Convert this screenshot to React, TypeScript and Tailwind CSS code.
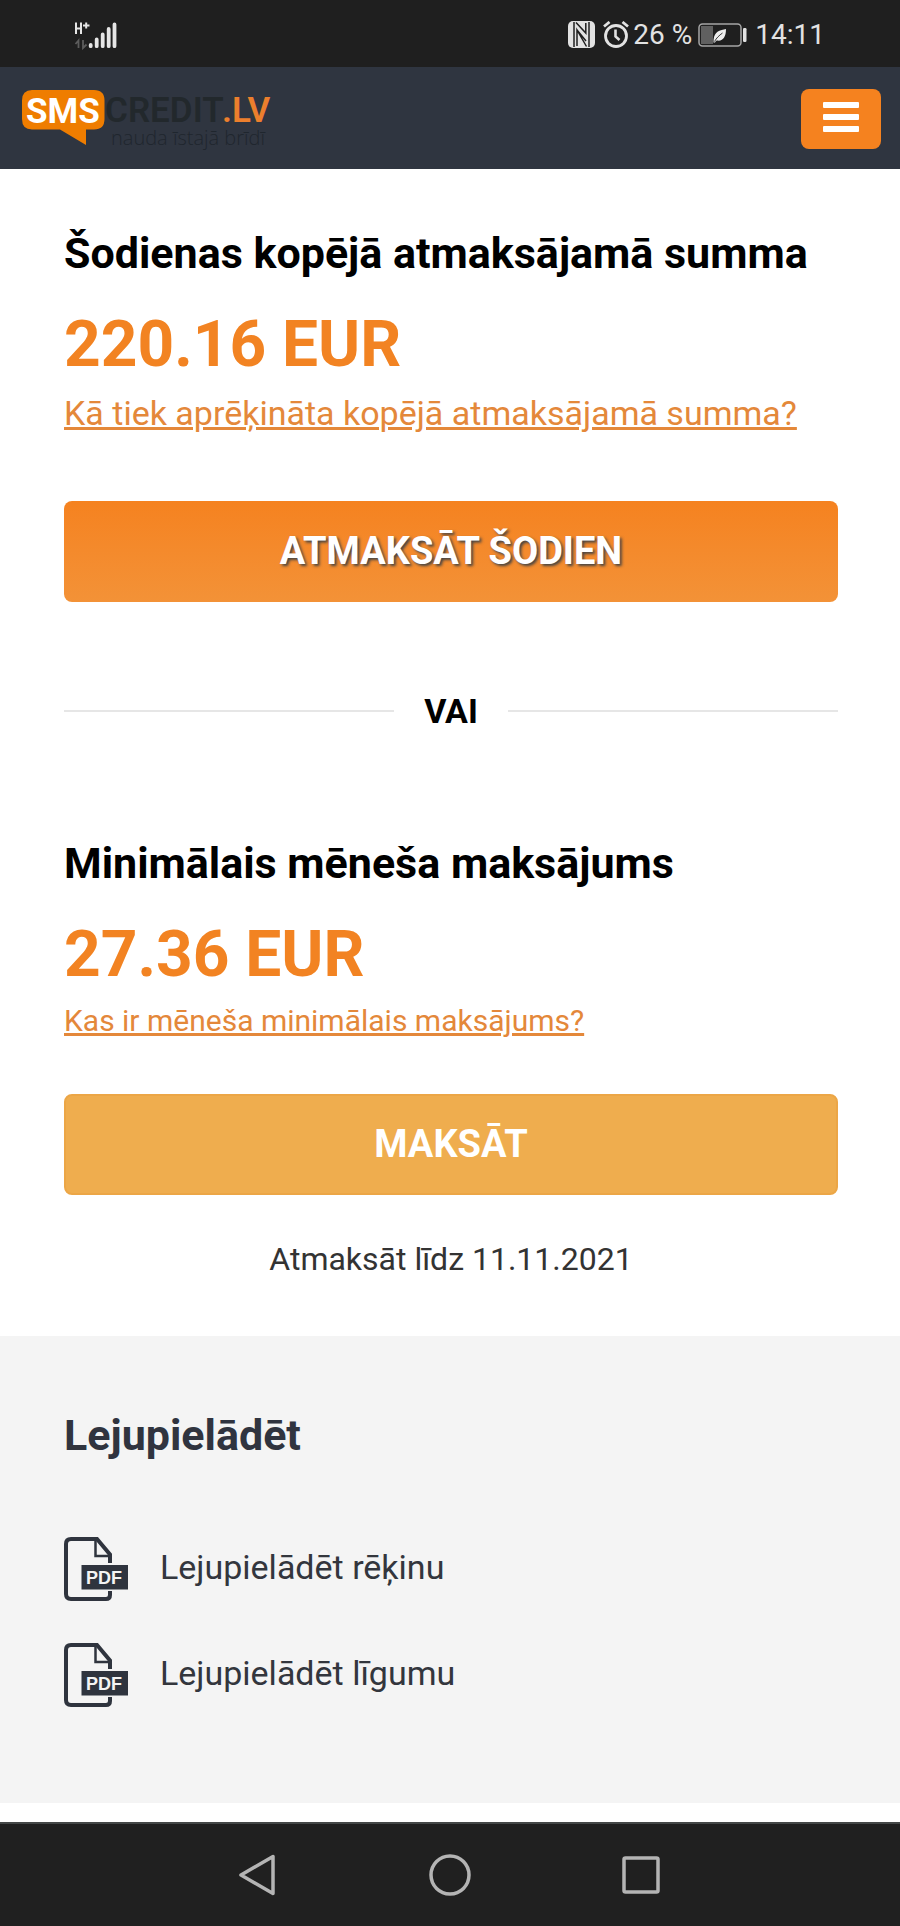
import React from "react";

function SignalIcon() {
  return (
    <svg width="44" height="30" viewBox="74 18 44 30" role="img" aria-label="H+ signāls">
      <g fill="none" stroke="#e6e6e6" strokeWidth="2">
        <path d="M76 20.5V32M81 20.5V32M76 26.5H81" />
        <path d="M83 23.5h6.500M86.200 20.500v6" />
      </g>
      <g fill="none" stroke="#5c5c5c" strokeWidth="1.800">
        <path d="M75.500 42l3-3.500V46M83 38v8l3.500-3.500" />
      </g>
      <g stroke="#e6e6e6" strokeWidth="3.800" strokeLinecap="round">
        <path d="M90.700 43v1.200M96.700 37.500v6.700M102.700 32.500v11.700M108.700 27v17.200M114.500 22.500v21.700" />
      </g>
    </svg>
  );
}

function NfcIcon() {
  return (
    <svg width="27" height="27" viewBox="0 0 27 27" aria-hidden="true">
      <rect width="27" height="27" rx="5" fill="#e2e2e2" />
      <path
        d="M6 1V26M21 1V26M8 1.500L17.800 12V2M9 25V9L18.500 25.500M9 9L18 20"
        fill="none"
        stroke="#1f1f1f"
        strokeWidth="1.500"
      />
    </svg>
  );
}

function AlarmIcon() {
  return (
    <svg width="26" height="27" viewBox="0 0 26 27" fill="none" stroke="#e2e2e2" aria-hidden="true">
      <circle cx="13" cy="15" r="10.500" strokeWidth="2.800" />
      <path d="M12.500 8.500v7l4 3.500" strokeWidth="2.600" />
      <path d="M1 5.500L6.500 1M25 5.500L19.500 1" strokeWidth="2.800" />
    </svg>
  );
}

function BatteryIcon() {
  return (
    <svg width="49" height="24" viewBox="0 0 49 24" aria-hidden="true">
      <rect x="1" y="1" width="42" height="22" rx="3.500" fill="none" stroke="#a5a5a5" strokeWidth="1.500" />
      <rect x="3" y="3" width="12" height="18" fill="#606060" />
      <path d="M15.500 19.500c0-9 3-12 12.500-13.500 0 8-3 12.500-9 11.500-1 .2-1.500 1-2 2z" fill="#ededed" />
      <path d="M16.500 18.500c2-3.500 4.500-6 8-8.500" fill="none" stroke="#3a3a3a" strokeWidth="1" />
      <rect x="45" y="5" width="3.500" height="14" rx="1.200" fill="#e2e2e2" />
    </svg>
  );
}

function Logo() {
  return (
    <svg width="256" height="66" viewBox="20 85 256 66" role="img" aria-label="SMSCREDIT.LV">
      <path
        d="M32 89H94Q104.500 89 104.500 99.500V118Q104.500 128.500 94 128.500H86V144L60 128.500H32Q22 128.500 22 118V99.500Q22 89 32 89Z"
        fill="#ef7d00"
      />
      <g fontFamily="Roboto, sans-serif" fontSize="35">
        <text x="26" y="122" fontWeight="700" fill="#ffffff">
          SMS
        </text>
        <text x="105" y="121" fontWeight="600" fill="#22282c">
          CREDIT
        </text>
        <text x="222" y="121" fontWeight="600" fill="#ec7f2d">
          .LV
        </text>
      </g>
      <text x="111" y="144" fontFamily="'Open Sans', sans-serif" fontSize="20" fontWeight="300" fill="#1f262e">
        nauda īstajā brīdī
      </text>
    </svg>
  );
}

function PdfIcon() {
  return (
    <svg width="64" height="64" viewBox="0 0 64 64" className="shrink-0" aria-hidden="true">
      <g fill="none" stroke="#2f343e" strokeWidth="4">
        <path d="M46 26V17.500L33 2H7Q2 2 2 7V57Q2 62 7 62H42Q46 62 46 58V54" />
        <path d="M31.500 2V19H46" strokeWidth="2.500" />
      </g>
      <rect x="17.500" y="28" width="46.500" height="24.500" fill="#2f343e" />
      <text x="22" y="47" fontFamily="'Liberation Sans', sans-serif" fontWeight="700" fontSize="18" fill="#f4f4f4">
        PDF
      </text>
    </svg>
  );
}

function StatusBar() {
  return (
    <div className="flex h-[67px] items-center justify-between bg-[#1f1f1f] pt-0.5 pr-[75px] pl-[74px] text-[28px] leading-9 text-[#e2e2e2]">
      <SignalIcon />
      <div className="flex items-center">
        <NfcIcon />
        <span className="ml-2">
          <AlarmIcon />
        </span>
        <span className="ml-1">26 %</span>
        <span className="ml-1.5">
          <BatteryIcon />
        </span>
        <span className="ml-2">14:11</span>
      </div>
    </div>
  );
}

function Header() {
  return (
    <header className="flex h-[102px] items-center justify-between bg-[#2f3540] pt-0.5 pr-[19px] pl-5">
      <a href="#">
        <Logo />
      </a>
      <button
        type="button"
        aria-label="Izvēlne"
        className="flex h-[60px] w-20 flex-col items-center justify-center gap-1.5 rounded-lg bg-[#f5821f] pb-1"
      >
        <span className="h-1.5 w-9 rounded-[1px] bg-white" />
        <span className="h-1.5 w-9 rounded-[1px] bg-white" />
        <span className="h-1.5 w-9 rounded-[1px] bg-white" />
      </button>
    </header>
  );
}

function Summary({ title, amount }: { title: string; amount: string }) {
  return (
    <>
      <h2 className="text-[43px] leading-[60px] font-bold text-black">{title}</h2>
      <p className="mt-[26px] text-[64px] leading-[72px] font-bold text-[#f28322]">{amount}</p>
    </>
  );
}

function Download({ label }: { label: string }) {
  return (
    <li>
      <a href="#" className="flex items-center gap-8 text-[34px] leading-[60px] text-[#33363d]">
        <PdfIcon />
        <span className="pb-1">{label}</span>
      </a>
    </li>
  );
}

function NavBar() {
  return (
    <nav className="flex h-[104px] items-center justify-center gap-[151px] border-t-2 border-[#444747] bg-[#202020] pr-1">
      <button type="button" aria-label="Atpakaļ">
        <svg width="42" height="42" viewBox="0 0 42 42" fill="none" stroke="#b4b4b4" strokeWidth="3.500" strokeLinejoin="round">
          <path d="M37 2.500V39.500L5 21Z" />
        </svg>
      </button>
      <button type="button" aria-label="Sākums">
        <svg width="42" height="42" viewBox="0 0 42 42" fill="none" stroke="#b4b4b4" strokeWidth="3.500">
          <circle cx="21" cy="21" r="19" />
        </svg>
      </button>
      <button type="button" aria-label="Pārskats">
        <svg width="38" height="38" viewBox="0 0 38 38" fill="none" stroke="#b4b4b4" strokeWidth="3.500">
          <rect x="2" y="2" width="34" height="34" rx="1.500" />
        </svg>
      </button>
    </nav>
  );
}

export default function App() {
  return (
    <div className="flex min-h-screen flex-col bg-white font-['Roboto',sans-serif]">
      <StatusBar />
      <Header />
      <main>
        <section className="flex flex-col pt-[54px] pr-[62px] pb-[53px] pl-16">
          <Summary title="Šodienas kopējā atmaksājamā summa" amount="220.16 EUR" />
          <a href="#" className="mt-2 self-start text-[34px] leading-[48px] text-[#e4883a] underline">
            Kā tiek aprēķināta kopējā atmaksājamā summa?
          </a>
          <button
            type="button"
            className="mt-16 h-[101px] rounded-lg bg-linear-to-b from-[#f5821f] to-[#f39237] text-[38px] font-bold text-white [text-shadow:2px_2px_3px_#444444]"
          >
            ATMAKSĀT ŠODIEN
          </button>
          <div className="mt-[85px] flex items-center gap-[30px] text-[34px] leading-[48px] font-bold text-black">
            <span className="h-0.5 flex-1 bg-[#e6e6e6]" />
            VAI
            <span className="h-0.5 flex-1 bg-[#e6e6e6]" />
          </div>
          <div className="mt-[98px]">
            <Summary title="Minimālais mēneša maksājums" amount="27.36 EUR" />
          </div>
          <a href="#" className="mt-2 self-start text-[30px] leading-[44px] text-[#e4883a] underline">
            Kas ir mēneša minimālais maksājums?
          </a>
          <button
            type="button"
            className="mt-[51px] h-[101px] rounded-lg border-2 border-[#eca646] bg-[#efad4e] text-[38px] font-bold text-white"
          >
            MAKSĀT
          </button>
          <p className="mt-10 text-center text-[32px] leading-[48px] text-[#333333]">Atmaksāt līdz 11.11.2021</p>
        </section>
        <section className="bg-[#f4f4f4] px-16 pt-[69px] pb-24">
          <h2 className="text-[43px] leading-[60px] font-bold text-[#30343f]">Lejupielādēt</h2>
          <ul className="mt-[72px] flex flex-col gap-[42px]">
            <Download label="Lejupielādēt rēķinu" />
            <Download label="Lejupielādēt līgumu" />
          </ul>
        </section>
      </main>
      <div className="mt-auto">
        <NavBar />
      </div>
    </div>
  );
}
